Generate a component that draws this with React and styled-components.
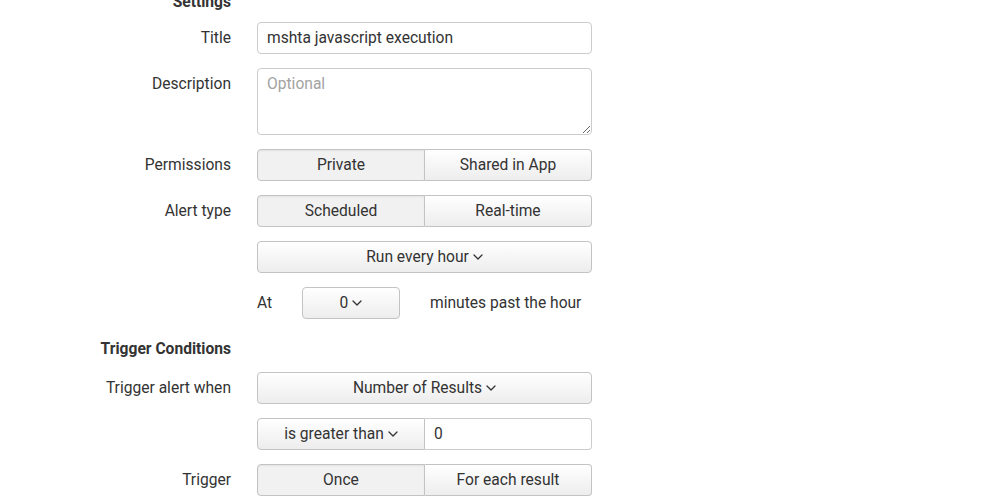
import styled, { createGlobalStyle } from 'styled-components';

const GlobalStyle = createGlobalStyle`
  html, body {
    margin: 0;
    padding: 0;
    background: #fff;
  }
  body {
    font-family: Roboto, "Liberation Sans", sans-serif;
    font-size: 15.6px;
    color: #333;
  }
`;

const Form = styled.div`
  width: 592px;
  margin-top: -8px;
`;

const Legend = styled.div`
  width: 231px;
  text-align: right;
  font-weight: 700;
  color: #333;
  line-height: 20px;
  margin-bottom: ${p => p.$mb || 12}px;
  margin-top: ${p => p.$mt || 0}px;
`;

const Row = styled.div`
  display: grid;
  grid-template-columns: 231px 335px;
  column-gap: 26px;
  align-items: start;
  margin-bottom: 14px;
`;

const Label = styled.label`
  text-align: right;
  line-height: 32px;
  color: #333;
`;

const Field = styled.input`
  box-sizing: border-box;
  height: 32px;
  width: 100%;
  border: 1px solid #ccc;
  border-radius: 4px;
  padding: 0 9px;
  font: inherit;
  color: #333;
  background: #fff;
  outline: none;
`;

const Area = styled.textarea`
  box-sizing: border-box;
  height: 67px;
  width: 100%;
  border: 1px solid #ccc;
  border-radius: 4px;
  padding: 5px 9px;
  font: inherit;
  line-height: 20px;
  color: #333;
  background: #fff;
  outline: none;
  display: block;
  &::placeholder {
    color: #a3a3a3;
  }
`;

const Group = styled.div`
  display: flex;
  height: 32px;
`;

const Btn = styled.button`
  box-sizing: border-box;
  flex: ${p => p.$flex || '1 1 0'};
  min-width: 0;
  height: 32px;
  display: flex;
  align-items: center;
  justify-content: center;
  gap: 4px;
  font: inherit;
  color: #333;
  border: 1px solid #c3c3c3;
  background: ${p => p.$active ? '#f1f1f1' : 'linear-gradient(#fff, #ededed)'};
  box-shadow: ${p => p.$active ? 'inset 0 1px 2px rgba(0,0,0,0.06)' : 'none'};
  border-radius: 4px;
  padding: 0 8px;
  cursor: pointer;
  & + & {
    border-left: none;
  }
  &:first-child:not(:last-child) {
    border-top-right-radius: 0;
    border-bottom-right-radius: 0;
  }
  &:last-child:not(:first-child) {
    border-top-left-radius: 0;
    border-bottom-left-radius: 0;
  }
`;

const JoinedField = styled(Field)`
  flex: 1 1 0;
  min-width: 0;
  width: auto;
  border-left: none;
  border-top-left-radius: 0;
  border-bottom-left-radius: 0;
`;

const Inline = styled.div`
  display: flex;
  align-items: center;
  height: 32px;
`;

const InlineText = styled.span`
  line-height: 32px;
  width: ${p => p.$w ? `${p.$w}px` : 'auto'};
  white-space: nowrap;
`;

const SmallBtn = styled(Btn)`
  flex: none;
  width: 98px;
  margin-right: 30px;
`;

const Chevron = () => (
  <svg width="10" height="6" viewBox="0 0 10 6" fill="none">
    <path d="M1 1l4 4 4-4" stroke="#333" strokeWidth="1.3" strokeLinecap="round" strokeLinejoin="round" />
  </svg>
);

export default function App() {
  return (
    <>
      <GlobalStyle />
      <Form>
        <Legend $mb={10}>Settings</Legend>
        <Row>
          <Label>Title</Label>
          <Field defaultValue="mshta javascript execution" />
        </Row>
        <Row>
          <Label>Description</Label>
          <Area placeholder="Optional" />
        </Row>
        <Row>
          <Label>Permissions</Label>
          <Group>
            <Btn $active>Private</Btn>
            <Btn>Shared in App</Btn>
          </Group>
        </Row>
        <Row>
          <Label>Alert type</Label>
          <Group>
            <Btn $active>Scheduled</Btn>
            <Btn>Real-time</Btn>
          </Group>
        </Row>
        <Row>
          <span />
          <Group>
            <Btn>Run every hour <Chevron /></Btn>
          </Group>
        </Row>
        <Row>
          <span />
          <Inline>
            <InlineText $w={45}>At</InlineText>
            <SmallBtn>0 <Chevron /></SmallBtn>
            <InlineText>minutes past the hour</InlineText>
          </Inline>
        </Row>
        <Legend $mt={20} $mb={13}>Trigger Conditions</Legend>
        <Row>
          <Label>Trigger alert when</Label>
          <Group>
            <Btn>Number of Results <Chevron /></Btn>
          </Group>
        </Row>
        <Row>
          <span />
          <Group>
            <Btn $flex="0 0 168px">is greater than <Chevron /></Btn>
            <JoinedField defaultValue="0" />
          </Group>
        </Row>
        <Row>
          <Label>Trigger</Label>
          <Group>
            <Btn $active>Once</Btn>
            <Btn>For each result</Btn>
          </Group>
        </Row>
      </Form>
    </>
  );
}
